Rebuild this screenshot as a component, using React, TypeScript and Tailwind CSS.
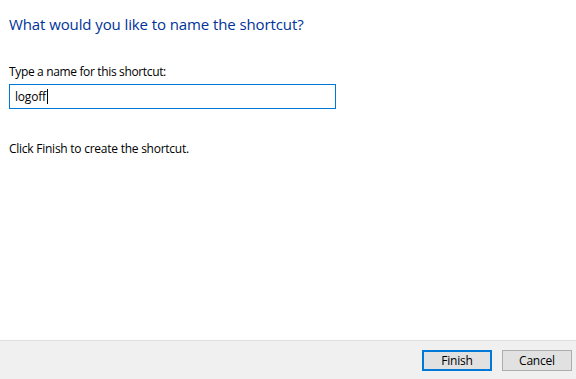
export default function App() {
  return (
    <div className="w-[576px] h-[379px] flex flex-col bg-white font-['Open_Sans',sans-serif] overflow-hidden">
      {/* Wizard body */}
      <div className="flex-1 pl-[9px] pt-[13px]">
        <h1 className="text-[15px] leading-[22px] text-[#003399] tracking-[-0.1px]">
          What would you like to name the shortcut?
        </h1>

        <label className="block mt-[29px] text-[12px] leading-[16px] text-black tracking-[-0.35px]">
          Type a name for this shortcut:
        </label>
        <div className="mt-[4px] w-[327px] h-[25px] border border-[#0078d7] flex items-center pl-[5px]">
          <span className="text-[12px] text-black tracking-[-0.2px]">logoff</span>
          <span className="w-px h-[15px] bg-black ml-px" />
        </div>

        <p className="mt-[32px] text-[12px] leading-[16px] text-black tracking-[-0.25px]">
          Click Finish to create the shortcut.
        </p>
      </div>

      {/* Footer buttons */}
      <div className="h-[39px] border-t border-[#dfdfdf] bg-[#f0f0f0] flex items-start justify-end gap-[10px] pr-[4px] pt-[9px]">
        <button className="w-[70px] h-[21px] border-2 border-[#0078d7] bg-[#e1e1e1] text-[12px] leading-none text-black tracking-[-0.2px]">
          Finish
        </button>
        <button className="w-[70px] h-[21px] border border-[#adadad] bg-[#e1e1e1] text-[12px] leading-none text-black tracking-[-0.2px]">
          Cancel
        </button>
      </div>
    </div>
  );
}
